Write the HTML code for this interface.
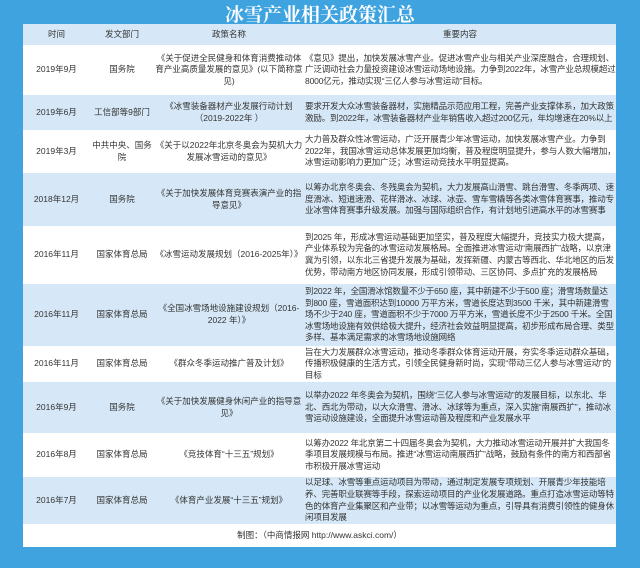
<html><head><style>
body{margin:0;width:640px;height:568px;background:#3fa3e0;font-family:"Liberation Sans","Noto Sans CJK SC",sans-serif;overflow:hidden;position:relative}
.t{position:absolute;top:1px;left:0;width:640px;text-align:center;color:#fff;font-size:19px;font-weight:bold;line-height:26px;font-family:"Noto Serif CJK SC","Noto Sans CJK SC",serif}
table{position:absolute;left:23px;top:24px;width:593px;border-collapse:collapse;font-size:8.5px;color:#333;line-height:11.6px;table-layout:fixed}
td{padding:0 1px;text-align:center;vertical-align:middle;overflow:hidden}
td.c{text-align:left;padding-left:1px;padding-right:0;letter-spacing:-0.15px}
tr.a{background:#fff}tr.b{background:#d6e8f7}
tr.h{background:#d6e8f7;height:21px}
</style></head><body>
<div class="t">冰雪产业相关政策汇总</div>
<table>
<colgroup><col style="width:67px"><col style="width:64px"><col style="width:150px"><col></colgroup>
<tr class="h"><td>时间</td><td>发文部门</td><td>政策名称</td><td>重要内容</td></tr>
<tr class="a" style="height:50px"><td>2019年9月</td><td>国务院</td><td>《关于促进全民健身和体育消费推动体育产业高质量发展的意见》(以下简称意见)</td><td class="c">《意见》提出，加快发展冰雪产业。促进冰雪产业与相关产业深度融合，合理规划、广泛调动社会力量投资建设冰雪运动场地设施。力争到2022年，冰雪产业总规模超过8000亿元，推动实现“三亿人参与冰雪运动”目标。</td></tr>
<tr class="b" style="height:35px"><td>2019年6月</td><td>工信部等9部门</td><td>《冰雪装备器材产业发展行动计划（2019-2022年 ）</td><td class="c">要求开发大众冰雪装备器材，实施精品示范应用工程，完善产业支撑体系，加大政策激励。到2022年，冰雪装备器材产业年销售收入超过200亿元，年均增速在20%以上</td></tr>
<tr class="a" style="height:43px"><td>2019年3月</td><td>中共中央、国务院</td><td>《关于以2022年北京冬奥会为契机大力发展冰雪运动的意见》</td><td class="c">大力普及群众性冰雪运动，广泛开展青少年冰雪运动，加快发展冰雪产业。力争到2022年，我国冰雪运动总体发展更加均衡，普及程度明显提升，参与人数大幅增加，冰雪运动影响力更加广泛；冰雪运动竞技水平明显提高。</td></tr>
<tr class="b" style="height:53px"><td>2018年12月</td><td>国务院</td><td>《关于加快发展体育竞赛表演产业的指导意见》</td><td class="c">以筹办北京冬奥会、冬残奥会为契机，大力发展高山滑雪、跳台滑雪、冬季两项、速度滑冰、短道速滑、花样滑冰、冰球、冰壶、雪车雪橇等各类冰雪体育赛事，推动专业冰雪体育赛事升级发展。加强与国际组织合作，有计划地引进高水平的冰雪赛事</td></tr>
<tr class="a" style="height:58px"><td>2016年11月</td><td>国家体育总局</td><td>《冰雪运动发展规划（2016-2025年）》</td><td class="c">到2025 年，形成冰雪运动基础更加坚实，普及程度大幅提升，竞技实力极大提高，产业体系较为完备的冰雪运动发展格局。全面推进冰雪运动“南展西扩”战略，以京津冀为引领，以东北三省提升发展为基础，发挥新疆、内蒙古等西北、华北地区的后发优势，带动南方地区协同发展，形成引领带动、三区协同、多点扩充的发展格局</td></tr>
<tr class="b" style="height:62px"><td>2016年11月</td><td>国家体育总局</td><td>《全国冰雪场地设施建设规划（2016-2022 年）》</td><td class="c">到2022 年，全国滑冰馆数量不少于650 座，其中新建不少于500 座；滑雪场数量达到800 座，雪道面积达到10000 万平方米，雪道长度达到3500 千米，其中新建滑雪场不少于240 座，雪道面积不少于7000 万平方米，雪道长度不少于2500 千米。全国冰雪场地设施有效供给极大提升，经济社会效益明显提高，初步形成布局合理、类型多样、基本满足需求的冰雪场地设施网络</td></tr>
<tr class="a" style="height:36px"><td>2016年11月</td><td>国家体育总局</td><td>《群众冬季运动推广普及计划》</td><td class="c">旨在大力发展群众冰雪运动，推动冬季群众体育运动开展，夯实冬季运动群众基础，传播积极健康的生活方式，引领全民健身新时尚，实现“带动三亿人参与冰雪运动”的目标</td></tr>
<tr class="b" style="height:51px"><td>2016年9月</td><td>国务院</td><td>《关于加快发展健身休闲产业的指导意见》</td><td class="c">以举办2022 年冬奥会为契机，围绕“三亿人参与冰雪运动”的发展目标，以东北、华北、西北为带动，以大众滑雪、滑冰、冰球等为重点，深入实施“南展西扩”，推动冰雪运动设施建设，全面提升冰雪运动普及程度和产业发展水平</td></tr>
<tr class="a" style="height:44px"><td>2016年8月</td><td>国家体育总局</td><td>《竞技体育“十三五”规划》</td><td class="c">以筹办2022 年北京第二十四届冬奥会为契机，大力推动冰雪运动开展并扩大我国冬季项目发展规模与布局。推进“冰雪运动南展西扩”战略，鼓励有条件的南方和西部省市积极开展冰雪运动</td></tr>
<tr class="b" style="height:47px"><td>2016年7月</td><td>国家体育总局</td><td>《体育产业发展“十三五”规划》</td><td class="c">以足球、冰雪等重点运动项目为带动，通过制定发展专项规划、开展青少年技能培养、完善职业联赛等手段，探索运动项目的产业化发展道路。重点打造冰雪运动等特色的体育产业集聚区和产业带；以冰雪等运动为重点，引导具有消费引领性的健身休闲项目发展</td></tr>
<tr class="a" style="height:23px"><td colspan="4">制图：（中商情报网 http://www.askci.com/）</td></tr>
</table>
</body></html>
